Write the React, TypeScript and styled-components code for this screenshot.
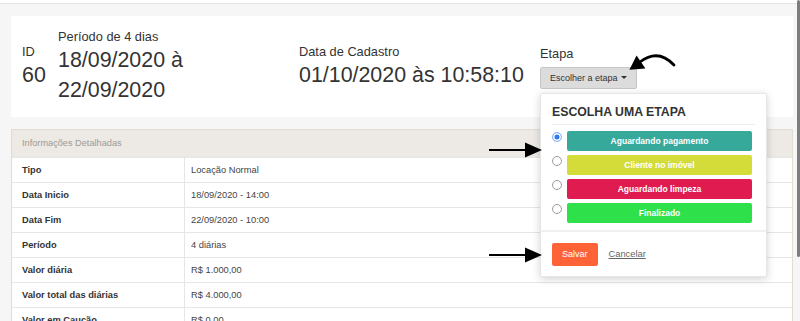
import React from "react";
import styled, { createGlobalStyle } from "styled-components";

const GlobalStyle = createGlobalStyle`
  html, body {
    margin: 0;
    padding: 0;
    background: #f6f6f6;
    font-family: "Liberation Sans", Arial, Helvetica, sans-serif;
    color: #333;
    overflow: hidden;
  }
  * {
    box-sizing: border-box;
  }
`;

const TopBar = styled.div`
  height: 4px;
  background: #fff;
  border-bottom: 1px solid #e6e6e6;
`;

const Page = styled.div`
  padding: 12px 7px 0 11px;
`;

const Card = styled.div`
  display: flex;
  align-items: center;
  background: #fff;
  padding: 13px 12px 12px 11px;
`;

const Column = styled.div<{ $width: number }>`
  position: relative;
  display: flex;
  flex-direction: column;
  width: ${(p) => p.$width}px;
  flex-shrink: 0;
`;

const Label = styled.div`
  font-size: 12.8px;
  line-height: 16px;
  color: #333;
`;

const BigValue = styled.div`
  font-size: 21.4px;
  line-height: 30px;
  color: #333;
`;

const DropButton = styled.button`
  align-self: flex-start;
  margin-top: 5px;
  height: 22px;
  padding: 0 9px;
  display: flex;
  align-items: center;
  gap: 3px;
  font-family: inherit;
  font-size: 9px;
  color: #333;
  background: #dcdcdc;
  border: 1px solid #c6c6c6;
  border-radius: 2px;
`;

const Caret = styled.span`
  width: 0;
  height: 0;
  border-left: 3px solid transparent;
  border-right: 3px solid transparent;
  border-top: 3px solid #333;
`;

const CurvedArrow = styled.svg`
  position: absolute;
  left: 88px;
  top: 6px;
  overflow: visible;
`;

const Popup = styled.div`
  position: absolute;
  top: calc(100% + 4px);
  left: 0;
  width: 227px;
  background: #fff;
  border: 1px solid #e6e6e6;
  border-radius: 2px;
  box-shadow: 0 2px 8px rgba(0, 0, 0, 0.18);
  z-index: 10;
`;

const PopupBody = styled.div`
  padding: 10px 11px 7px;
`;

const PopupTitle = styled.div`
  font-size: 12.3px;
  font-weight: bold;
  line-height: 16px;
  color: #333;
  padding-bottom: 4px;
  border-bottom: 1px solid #eeeeee;
`;

const Options = styled.div`
  display: flex;
  flex-direction: column;
  gap: 4px;
  margin-top: 6px;
  padding-right: 3px;
`;

const Option = styled.div`
  display: flex;
  align-items: flex-start;
  gap: 5px;
`;

const Radio = styled.span<{ $checked?: boolean }>`
  width: 10px;
  height: 10px;
  margin-top: 1px;
  border-radius: 50%;
  flex-shrink: 0;
  background: ${(p) => (p.$checked ? "#2d7cf6" : "#fff")};
  border: 1px solid ${(p) => (p.$checked ? "#8fb9f7" : "#9a9a9a")};
  box-shadow: ${(p) => (p.$checked ? "inset 0 0 0 1.5px #fff" : "none")};
`;

const StageButton = styled.div<{ $color: string }>`
  flex: 1;
  height: 20px;
  display: flex;
  align-items: center;
  justify-content: center;
  background: ${(p) => p.$color};
  border-radius: 2px;
  color: #fff;
  font-size: 8.5px;
  font-weight: bold;
`;

const PopupFooter = styled.div`
  display: flex;
  align-items: center;
  gap: 11px;
  padding: 11px 11px 10px;
  border-top: 2px solid #f0f0f0;
`;

const SaveButton = styled.button`
  height: 23px;
  padding: 0 10px;
  font-family: inherit;
  font-size: 9px;
  color: #fff;
  background: #fd6337;
  border: none;
  border-radius: 2px;
`;

const CancelLink = styled.a`
  font-size: 9.3px;
  color: #666;
  text-decoration: underline;
`;

const StraightArrow = styled.svg<{ $top: number }>`
  position: absolute;
  left: -54px;
  top: ${(p) => p.$top}px;
`;

const Panel = styled.div`
  margin-top: 12px;
  background: #fff;
  border: 1px solid #e2dcd5;
  border-bottom: none;
`;

const PanelHeader = styled.div`
  height: 27px;
  line-height: 27px;
  padding-left: 10px;
  background: #ede9e4;
  color: #a09a95;
  font-size: 9.2px;
`;

const Row = styled.div`
  display: grid;
  grid-template-columns: 172px 1fr;
  height: 25px;
  border-top: 1px solid #e6e6e6;
  font-size: 9.3px;
  line-height: 24px;
`;

const RowLabel = styled.div`
  padding-left: 10px;
  font-weight: bold;
  color: #333;
`;

const RowValue = styled.div`
  padding-left: 6px;
  border-left: 1px solid #e6e6e6;
  color: #444;
`;

const ScrollThumb = styled.div`
  position: fixed;
  top: 0;
  right: 0;
  width: 3px;
  height: 257px;
  background: #7d7d7d;
  border-radius: 2px;
`;

const stages = [
  { label: "Aguardando pagamento", color: "#37a99b", checked: true },
  { label: "Cliente no imóvel", color: "#d4dc3a" },
  { label: "Aguardando limpeza", color: "#e01b4f" },
  { label: "Finalizado", color: "#2ee04a" },
];

const details = [
  ["Tipo", "Locação Normal"],
  ["Data Inicio", "18/09/2020 - 14:00"],
  ["Data Fim", "22/09/2020 - 10:00"],
  ["Período", "4 diárias"],
  ["Valor diária", "R$ 1.000,00"],
  ["Valor total das diárias", "R$ 4.000,00"],
  ["Valor em Caução", "R$ 0,00"],
];

const Arrow = ({ top }: { top: number }) => (
  <StraightArrow $top={top} width="56" height="18" viewBox="0 0 56 18">
    <line x1="2" y1="9" x2="40" y2="9" stroke="#000" strokeWidth="2.2" />
    <polygon points="38,1.5 55,9 38,16.5" fill="#000" />
  </StraightArrow>
);

const App: React.FC = () => (
  <>
    <GlobalStyle />
    <TopBar />
    <Page>
      <Card>
        <Column $width={36}>
          <Label>ID</Label>
          <BigValue>60</BigValue>
        </Column>
        <Column $width={241}>
          <Label>Período de 4 dias</Label>
          <BigValue>18/09/2020 à</BigValue>
          <BigValue>22/09/2020</BigValue>
        </Column>
        <Column $width={241}>
          <Label>Data de Cadastro</Label>
          <BigValue>01/10/2020 às 10:58:10</BigValue>
        </Column>
        <Column $width={241}>
          <Label>Etapa</Label>
          <DropButton>
            Escolher a etapa <Caret />
          </DropButton>
          <CurvedArrow width="50" height="22" viewBox="0 0 50 22">
            <path d="M12 10 Q30 -4 46 13" fill="none" stroke="#000" strokeWidth="2.8" strokeLinecap="round" />
            <polygon points="1.4,17.7 8.6,3.4 17.4,16.6" fill="#000" />
          </CurvedArrow>
          <Popup>
            <Arrow top={47} />
            <Arrow top={152} />
            <PopupBody>
              <PopupTitle>ESCOLHA UMA ETAPA</PopupTitle>
              <Options>
                {stages.map((s) => (
                  <Option key={s.label}>
                    <Radio $checked={s.checked} />
                    <StageButton $color={s.color}>{s.label}</StageButton>
                  </Option>
                ))}
              </Options>
            </PopupBody>
            <PopupFooter>
              <SaveButton>Salvar</SaveButton>
              <CancelLink>Cancelar</CancelLink>
            </PopupFooter>
          </Popup>
        </Column>
      </Card>
      <Panel>
        <PanelHeader>Informações Detalhadas</PanelHeader>
        {details.map(([label, value]) => (
          <Row key={label}>
            <RowLabel>{label}</RowLabel>
            <RowValue>{value}</RowValue>
          </Row>
        ))}
      </Panel>
    </Page>
    <ScrollThumb />
  </>
);

export default App;
